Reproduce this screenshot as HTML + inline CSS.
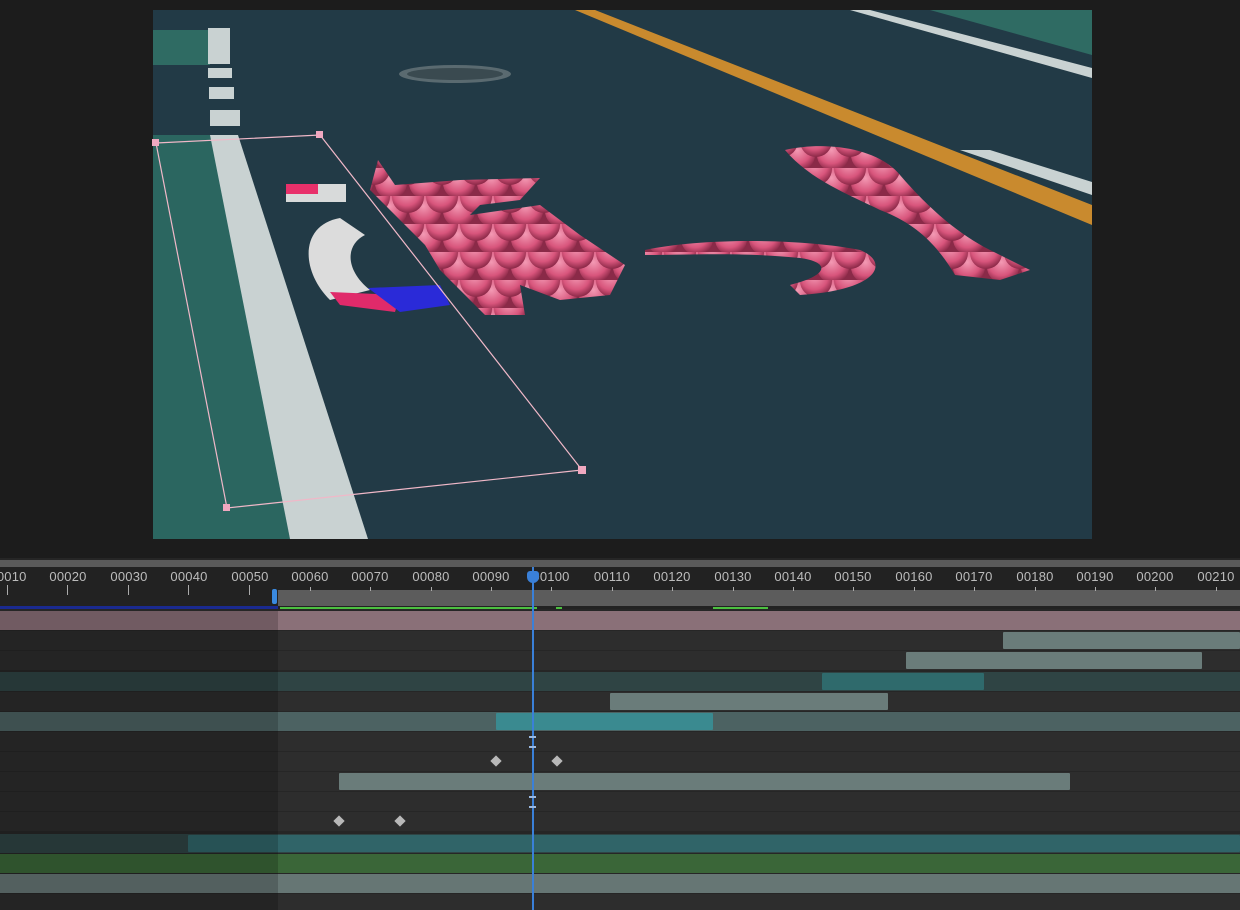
<!DOCTYPE html>
<html><head><meta charset="utf-8"><style>
*{margin:0;padding:0;box-sizing:border-box}
body{width:1240px;height:910px;background:#1c1c1c;position:relative;overflow:hidden;font-family:"Liberation Sans",sans-serif}
.a{position:absolute}
.lab{position:absolute;top:569px;font-size:13px;color:#bcbcbc;transform:translateX(-50%);letter-spacing:0.2px}
.tk{position:absolute;top:585px;width:1px;height:10px;background:#aaa}
.tks{position:absolute;top:587px;width:1px;height:4px;background:#aaa}
.row{position:absolute;left:0;width:1240px;height:19px;background:#2d2d2d}
.bar{position:absolute;height:17px;background:#6a7c7a;border-radius:1px}
.kf{position:absolute;width:8px;height:8px;background:#b8b8b8;transform:rotate(45deg)}
</style></head><body>
<svg class="a" style="left:0;top:0" width="1240" height="560" viewBox="0 0 1240 560">
<defs>
<radialGradient id="ball" cx="0.45" cy="0.35" r="0.7"><stop offset="0" stop-color="#f39ab4"/><stop offset="0.6" stop-color="#d8557c"/><stop offset="1" stop-color="#7a1f3c"/></radialGradient>
<pattern id="balls" width="34" height="28" patternUnits="userSpaceOnUse"><rect width="34" height="28" fill="#8a2a48"/><circle cx="17" cy="15" r="16" fill="url(#ball)"/><circle cx="0" cy="1" r="16" fill="url(#ball)"/><circle cx="34" cy="1" r="16" fill="url(#ball)"/></pattern>
</defs>
<rect x="153" y="10" width="939" height="529" fill="#223a46"/>
<polygon points="153,30 210,30 210,65 153,65" fill="#2f6b63"/>
<polygon points="153,135 212,135 290,539 153,539" fill="#2b6660"/>
<polygon points="210,135 238,135 368,539 290,539" fill="#c9d2d2"/>
<rect x="208" y="28" width="22" height="36" fill="#c9d2d2"/>
<rect x="208" y="68" width="24" height="10" fill="#c9d2d2"/>
<rect x="209" y="87" width="25" height="12" fill="#c9d2d2"/>
<rect x="210" y="110" width="30" height="16" fill="#c9d2d2"/>
<polygon points="575,10 595,10 1092,205 1092,225" fill="#c98a2e"/>
<polygon points="850,10 870,10 1092,68 1092,78" fill="#c9d2d2"/>
<polygon points="960,150 990,150 1092,182 1092,195" fill="#c9d2d2"/>
<polygon points="930,10 1092,10 1092,55" fill="#2f6b63"/>
<ellipse cx="455" cy="74" rx="56" ry="9" fill="#5a6a70"/>
<ellipse cx="455" cy="74" rx="48" ry="6" fill="#3a4a50"/>
<rect x="286" y="184" width="60" height="18" fill="#d8dada"/>
<rect x="286" y="184" width="32" height="10" fill="#e8306a"/>
<path d="M340,218 C300,225 300,270 330,300 L370,290 C345,270 345,245 365,235 Z" fill="#dcdcdc"/>
<path d="M330,292 L400,295 L395,312 L340,305 Z" fill="#e02a6a"/>
<path d="M368,288 L440,285 L450,305 L400,312 Z" fill="#2a2ad8"/>
<path d="M378,160 L395,185 L460,180 L540,178 L520,200 L480,205 L470,215 L540,205 L580,235 L625,265 L610,295 L560,300 L520,285 L525,315 L485,315 L460,290 L440,270 L425,245 L400,220 L370,190 Z" fill="url(#balls)"/>
<path d="M645,250 C700,238 800,238 860,250 C890,262 880,290 800,295 L790,285 C830,275 830,262 800,258 C740,252 690,255 645,255 Z" fill="url(#balls)"/>
<path d="M785,150 C830,140 880,150 900,175 C930,210 960,235 990,250 L1030,270 L1000,280 L955,275 C940,250 920,225 880,210 C850,195 810,180 785,150 Z" fill="url(#balls)"/>
<g stroke="#f0b8c8" stroke-width="1.2" fill="none"><polyline points="156,143 320,135 582,470 227,508 156,143"/></g>
<g fill="#f0a8c0"><rect x="152" y="139" width="7" height="7"/><rect x="316" y="131" width="7" height="7"/><rect x="223" y="504" width="7" height="7"/><rect x="578" y="466" width="8" height="8"/></g>
</svg>
<div class="a" style="left:0;top:558px;width:1240px;height:352px;background:#262626"></div>
<div class="a" style="left:0;top:560px;width:1240px;height:7px;background:#5a5a5a"></div>
<div class="a" style="left:0;top:567px;width:1240px;height:42px;background:#222"></div>
<div class="a" style="left:278px;top:590px;width:962px;height:16px;background:#5c5c5c"></div>
<div class="a" style="left:272px;top:589px;width:5px;height:15px;background:#3a8ae0;border-radius:2px"></div>
<div class="a" style="left:0;top:606px;width:278px;height:3px;background:#1a2a90"></div>
<div class="a" style="left:280px;top:607px;width:257px;height:2px;background:#4cc040"></div>
<div class="a" style="left:556px;top:607px;width:6px;height:2px;background:#4cc040"></div>
<div class="a" style="left:713px;top:607px;width:55px;height:2px;background:#4cc040"></div>
<div class="lab" style="left:8px">00010</div><div class="lab" style="left:68px">00020</div><div class="lab" style="left:129px">00030</div><div class="lab" style="left:189px">00040</div><div class="lab" style="left:250px">00050</div><div class="lab" style="left:310px">00060</div><div class="lab" style="left:370px">00070</div><div class="lab" style="left:431px">00080</div><div class="lab" style="left:491px">00090</div><div class="lab" style="left:551px">00100</div><div class="lab" style="left:612px">00110</div><div class="lab" style="left:672px">00120</div><div class="lab" style="left:733px">00130</div><div class="lab" style="left:793px">00140</div><div class="lab" style="left:853px">00150</div><div class="lab" style="left:914px">00160</div><div class="lab" style="left:974px">00170</div><div class="lab" style="left:1035px">00180</div><div class="lab" style="left:1095px">00190</div><div class="lab" style="left:1155px">00200</div><div class="lab" style="left:1216px">00210</div>
<div class="tk" style="left:7px"></div><div class="tk" style="left:67px"></div><div class="tk" style="left:128px"></div><div class="tk" style="left:188px"></div><div class="tk" style="left:249px"></div>
<div class="tks" style="left:310px"></div><div class="tks" style="left:370px"></div><div class="tks" style="left:431px"></div><div class="tks" style="left:491px"></div><div class="tks" style="left:551px"></div><div class="tks" style="left:612px"></div><div class="tks" style="left:672px"></div><div class="tks" style="left:733px"></div><div class="tks" style="left:793px"></div><div class="tks" style="left:853px"></div><div class="tks" style="left:914px"></div><div class="tks" style="left:974px"></div><div class="tks" style="left:1035px"></div><div class="tks" style="left:1095px"></div><div class="tks" style="left:1155px"></div><div class="tks" style="left:1216px"></div>
<div class="row" style="top:611px;background:#8a7078"></div>
<div class="row" style="top:631px"></div>
<div class="row" style="top:651px"></div>
<div class="row" style="top:672px;background:#2f4444"></div>
<div class="row" style="top:692px"></div>
<div class="row" style="top:712px;background:#4c6262"></div>
<div class="row" style="top:732px"></div>
<div class="row" style="top:752px"></div>
<div class="row" style="top:772px"></div>
<div class="row" style="top:792px"></div>
<div class="row" style="top:812px"></div>
<div class="row" style="top:834px;background:#2f4444"></div>
<div class="row" style="top:854px;background:#3a6638"></div>
<div class="row" style="top:874px;background:#667674"></div>
<div class="row" style="top:894px;height:16px"></div>
<div class="bar" style="left:1003px;top:632px;width:237px"></div>
<div class="bar" style="left:906px;top:652px;width:296px"></div>
<div class="bar" style="left:822px;top:673px;width:162px;background:#2f6a6c"></div>
<div class="bar" style="left:610px;top:693px;width:278px"></div>
<div class="bar" style="left:496px;top:713px;width:217px;background:#3a8a90"></div>
<div class="bar" style="left:339px;top:773px;width:731px"></div>
<div class="bar" style="left:188px;top:835px;width:1052px;background:#306468"></div>
<div class="kf" style="left:492px;top:757px"></div><div class="kf" style="left:553px;top:757px"></div>
<div class="kf" style="left:335px;top:817px"></div><div class="kf" style="left:396px;top:817px"></div>
<div class="a" style="left:0;top:611px;width:278px;height:299px;background:rgba(0,0,0,0.18)"></div>
<div class="a" style="left:532px;top:567px;width:2px;height:343px;background:#3a80d8"></div>
<div class="a" style="left:527px;top:571px;width:12px;height:12px;background:#3a80d8;border-radius:3px 3px 6px 6px"></div>
<div class="a" style="left:529px;top:736px;width:7px;height:12px;border-top:2px solid #9ab8e0;border-bottom:2px solid #9ab8e0"></div>
<div class="a" style="left:529px;top:796px;width:7px;height:12px;border-top:2px solid #9ab8e0;border-bottom:2px solid #9ab8e0"></div>
</body></html>
